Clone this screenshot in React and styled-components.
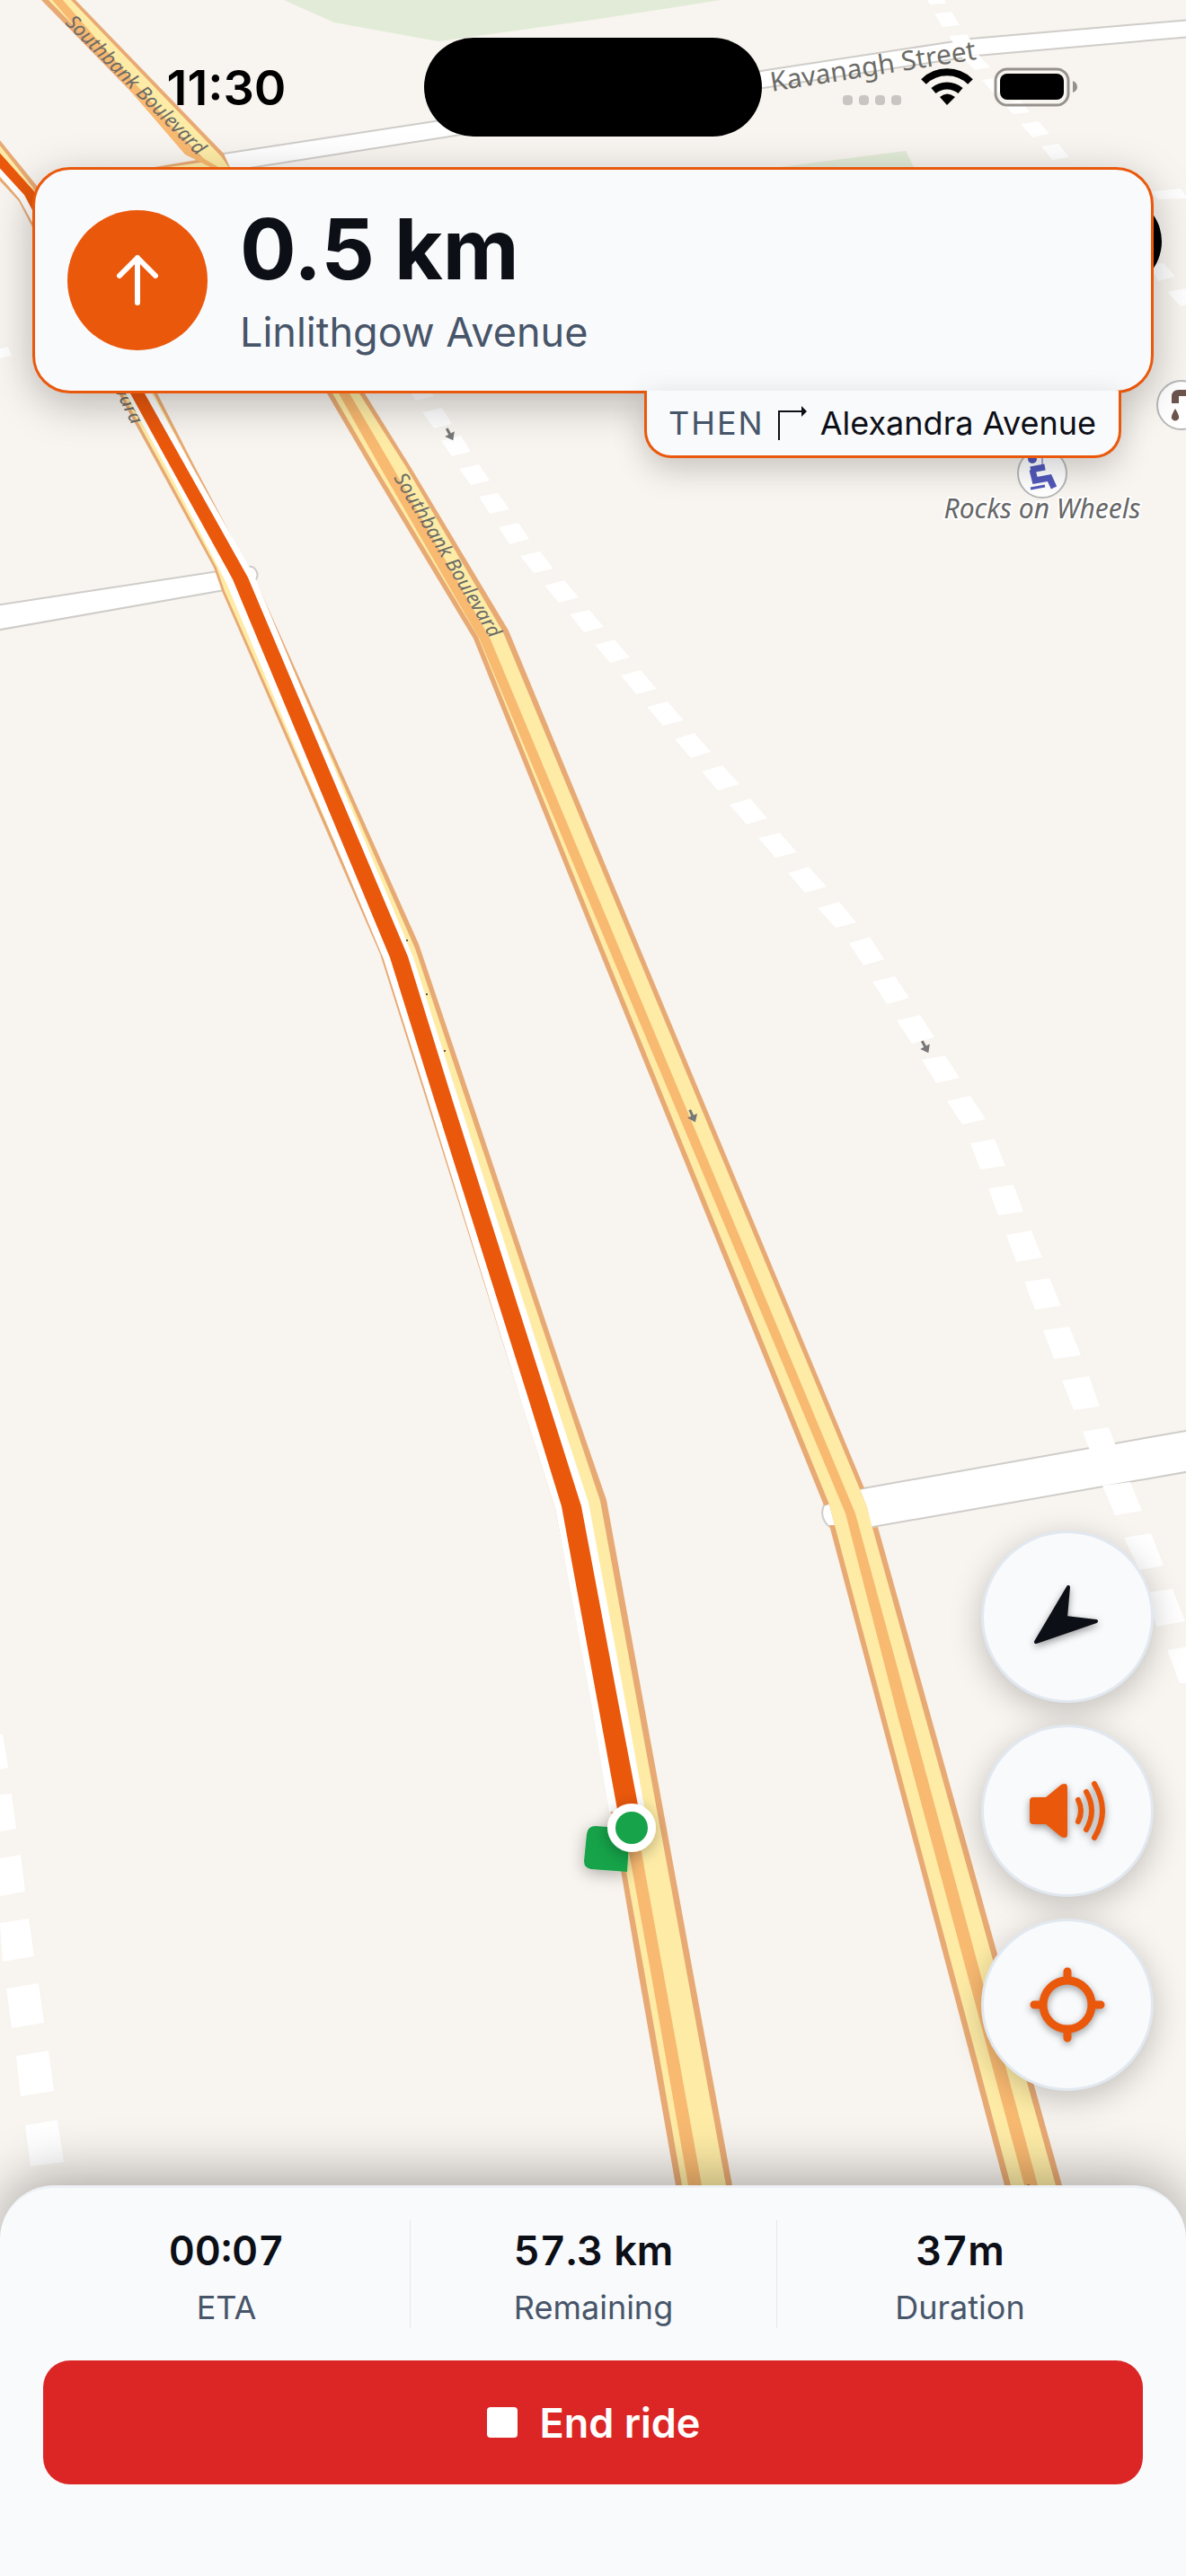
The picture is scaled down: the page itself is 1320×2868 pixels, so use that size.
import React from 'react';
import styled, { createGlobalStyle } from 'styled-components';

const GlobalStyle = createGlobalStyle`
    * {
        box-sizing: border-box;
    }
    body {
        margin: 0;
        background-color: #f8f4ef;
        font-family: Inter, 'Liberation Sans', sans-serif;
        color: #0d0f17;
    }
    h1, p, dl, dt, dd {
        margin: 0;
    }
`;

const Screen = styled.div`
    position: relative;
    display: flex;
    flex-direction: column;
    min-height: 100vh;
    overflow: hidden;
`;
const MapCanvas = styled.svg`
    position: absolute;
    inset: 0;
    width: 100%;
    height: 100%;
    z-index: -1;
`;
const RoadLabel = styled.text`
    font-family: 'Noto Sans', sans-serif;
    font-size: ${(props) => props.$size}px;
    font-style: ${(props) => (props.$italic ? 'italic' : 'normal')};
    fill: #6b6b66;
`;
const PoiLabel = styled.text`
    font-family: 'Noto Sans', sans-serif;
    font-size: 30px;
    font-style: italic;
    fill: #666;
    stroke: #fff;
    stroke-width: 4px;
    paint-order: stroke;
`;

const StatusBar = styled.header`
    display: grid;
    grid-template-columns: 1fr 376px 1fr;
    align-items: center;
    height: 110px;
    margin: 42px 32px 34px;
`;
const Clock = styled.time`
    text-align: center;
    font-size: 54px;
    font-weight: 600;
    color: #000;
`;
const Island = styled.div`
    height: 110px;
    border-radius: 55px;
    background-color: #000;
`;
const StatusIcons = styled.div`
    display: flex;
    justify-content: center;
`;

const TurnCard = styled.section`
    display: flex;
    align-items: center;
    gap: 36px;
    height: 252px;
    margin: 0 36px;
    padding: 0 36px;
    border: 3px solid #ea580c;
    border-radius: 42px;
    background-color: #f9fafc;
    box-shadow: 0 12px 48px rgba(0, 0, 0, 0.26);
`;
const TurnIcon = styled.div`
    display: flex;
    width: 156px;
    height: 156px;
    border-radius: 50%;
    background-color: #ea580c;
`;
const TurnText = styled.div`
    padding-bottom: 4px;
`;
const TurnDistance = styled.h1`
    font-size: 93px;
    line-height: 108px;
    font-weight: 700;
`;
const TurnRoad = styled.p`
    font-size: 45px;
    line-height: 54px;
    margin-top: 12px;
    color: #475569;
`;
const NextTurn = styled.div`
    display: flex;
    align-items: center;
    align-self: flex-end;
    gap: 15px;
    height: 75px;
    margin: -3px 72px 0 0;
    padding: 0 25px 0 24px;
    border: 3px solid #ea580c;
    border-top: 0;
    border-radius: 0 0 30px 30px;
    background-color: #f9fafc;
    box-shadow: 0 12px 36px rgba(0, 0, 0, 0.2);
    font-size: 36px;
    line-height: 42px;
`;
const Then = styled.span`
    color: #475569;
    letter-spacing: 2px;
`;

const MapControls = styled.div`
    display: flex;
    flex-direction: column;
    align-self: flex-end;
    gap: 24px;
    margin: auto 36px 105px 0;
`;
const RoundButton = styled.button`
    display: flex;
    width: 192px;
    height: 192px;
    padding: 0;
    border: 3px solid #e1e8f0;
    border-radius: 50%;
    background-color: #f9fafc;
    box-shadow: 0 9px 36px rgba(0, 0, 0, 0.22);
    svg {
        margin: auto;
        overflow: visible;
        filter: drop-shadow(0 3px 4px rgba(0, 0, 0, 0.4));
    }
`;

const Sheet = styled.footer`
    padding: 36px 48px 102px;
    border-top: 3px solid #edf1f6;
    border-radius: 60px 60px 0 0;
    background-color: #f9fafc;
    box-shadow: 0 -12px 60px rgba(0, 0, 0, 0.3);
`;
const Stats = styled.dl`
    display: grid;
    grid-template-columns: repeat(3, 1fr);
    margin-bottom: 36px;
`;
const Stat = styled.div`
    display: flex;
    flex-direction: column-reverse;
    justify-content: center;
    gap: 15px;
    height: 120px;
    padding-top: 4px;
    text-align: center;
    & + & {
        border-left: 1px solid #e4e7ec;
    }
`;
const StatLabel = styled.dt`
    font-size: 36px;
    line-height: 42px;
    color: #475569;
`;
const StatValue = styled.dd`
    font-size: 45px;
    line-height: 54px;
    font-weight: 600;
    font-variant-numeric: tabular-nums;
`;
const EndButton = styled.button`
    display: flex;
    align-items: center;
    justify-content: center;
    gap: 24px;
    width: 100%;
    height: 138px;
    border: 0;
    border-radius: 30px;
    background-color: #dc2626;
    color: #fff;
    font-family: inherit;
    font-size: 45px;
    font-weight: 600;
`;

const stats = [
    { label: 'ETA', value: '00:07' },
    { label: 'Remaining', value: '57.3 km' },
    { label: 'Duration', value: '37m' }
];

// tram tracks, one quad per dash
const dashes = [
    '1032,0 1051,0 1053,4 1035,5',
    '1040,15 1059,13 1068,28 1049,30',
    '1056,40 1076,38 1090,60 1070,63',
    '1070,63 1089,61 1102,75 1085,78',
    '1093,89 1112,86 1123,100 1106,104',
    '1117,115 1136,112 1146,125 1127,127',
    '1136,138 1156,135 1168,149 1149,153',
    '1159,163 1178,160 1190,175 1171,178',
    '1282,213 1314,210 1320,218 1320,221 1289,222',
    '1279,294 1295,293 1308,308 1289,313',
    '1299,325 1319,321 1325,338 1314,341',
    '0,388 9,386 13,396 0,399',
    '457,438 481,438 483,441 463,446',
    '470,459 492,454 503,472 483,477',
    '491,491 513,485 524,503 503,508',
    '511,522 533,517 545,535 524,540',
    '533,553 554,549 567,567 545,572',
    '555,587 577,582 589,600 567,606',
    '579,619 601,614 616,633 594,638',
    '606,652 628,646 644,665 622,671',
    '634,684 656,679 672,698 650,704',
    '662,718 684,712 701,732 679,738',
    '691,752 713,746 731,767 708,773',
    '720,787 743,781 761,802 738,808',
    '751,823 773,816 791,837 769,844',
    '781,859 804,852 823,873 799,880',
    '812,896 835,889 854,911 831,918',
    '844,933 868,927 887,949 863,955',
    '877,972 900,965 920,987 896,994',
    '910,1011 934,1004 953,1027 930,1033',
    '945,1050 968,1043 984,1068 961,1075',
    '971,1093 996,1087 1012,1111 987,1118',
    '998,1136 1024,1130 1040,1155 1015,1162',
    '1026,1180 1052,1175 1068,1200 1042,1206',
    '1054,1226 1080,1220 1097,1246 1071,1252',
    '1080,1273 1107,1268 1119,1298 1091,1302',
    '1100,1323 1128,1319 1139,1349 1111,1353',
    '1120,1375 1148,1370 1160,1400 1131,1405',
    '1140,1427 1168,1423 1181,1454 1152,1458',
    '1161,1481 1190,1477 1203,1509 1173,1513',
    '1182,1537 1212,1532 1224,1566 1195,1570',
    '1205,1594 1234,1589 1247,1623 1218,1628',
    '1227,1654 1258,1650 1271,1682 1241,1687',
    '1251,1712 1281,1707 1295,1743 1268,1748',
    '1276,1773 1305,1769 1319,1805 1287,1811',
    '1299,1837 1325,1833 1330,1874 1313,1874',
    '0,1931 3,1931 9,1968 0,1970',
    '0,1998 13,1997 18,2036 0,2039',
    '0,2069 23,2065 28,2106 0,2111',
    '0,2141 32,2136 38,2178 3,2184',
    '7,2214 43,2208 49,2252 13,2258',
    '18,2289 54,2283 60,2328 23,2334',
    '28,2366 64,2360 71,2407 34,2412'
];

const arrows = ['translate(501 484) rotate(-28)', 'translate(771 1243) rotate(-24)', 'translate(1030 1166) rotate(-28)', 'translate(1146 2440) rotate(-12)'];

function CityMap() {
    return (
        <MapCanvas viewBox="0 0 1320 2868" preserveAspectRatio="xMidYMid slice" role="img" aria-label="Map">
            <defs>
                <filter id="pinShadow" x="-60%" y="-60%" width="220%" height="220%">
                    <feDropShadow dx="0" dy="4" stdDeviation="9" floodColor="#000" floodOpacity="0.3" />
                </filter>
            </defs>
            <rect width="1320" height="2868" fill="#f8f4ef" />
            <path d="M316 0 L372 25 L488 46 L660 22 L802 0 Z M868 186 L1008 168 L1017 186 Z" fill="#e1ebd7" />

            {/* minor streets */}
            <g fill="#fff" stroke="#cfcdc9" strokeWidth="2">
                <path d="M249 171 L484 135 L847 79 L1056 47 L1081 43 L1325 22 V41 L1087 62 L849 98 L513 150 L220 196 Z" />
                <path d="M-5 674 L276 631 A9 9 0 0 1 284 646 L250 657 L-5 702 Z" />
                <path d="M950 1659 L1325 1592 V1638 L960 1702 L933 1702 A16 18 0 0 1 917 1676 Z" />
            </g>
            <g fill="#fff">
                {dashes.map((points) => (
                    <polygon key={points} points={points} />
                ))}
            </g>

            {/* Southbank Boulevard, east side */}
            <path d="M172 186 L220 178 L46 0 L84 0 L249 171 L262 200 L406 438 L457 520 L566 702 L689 1000 L962 1657 L957 1658 L965 1678 L970 1701 L977 1700 L1182 2433 L1190 2470 H1128 L1118 2433 L1000 1988 L923 1698 L929 1698 L923 1675 L917 1676 L660 1042 L527 711 L412 520 L364 438 L240 200 Z" fill="#e8aa74" />
            <path d="M180 187 L230 180 L54 0 L79 0 L246 174 L256 188 L400 438 L452 520 L560 704 L683 1000 L957 1658 L965 1678 L971 1701 L1175 2433 L1183 2470 H1136 L1125 2433 L1006 1988 L929 1698 L923 1675 L665 1040 L532 709 L418 520 L370 438 L250 200 Z" fill="#feeca6" />
            <path d="M58 0 H70 L219 172 L243 186 L389 438 L437 520 L546 712 L666 1000 L952 1685 L1000 1861 L1155 2433 L1160 2470 H1148 L1140 2433 L1000 1914 L941 1685 L654 1000 L534 712 L423 520 L377 438 L234 186 L206 172 Z" fill="#f8b971" />

            {/* Southbank Boulevard, west side */}
            <path d="M-5 150 L42 208 L175 438 L217 520 L276 632 L285 647 L466 1051 L523 1220 L637 1560 L675 1670 L717 1900 L772 2200 L815 2433 L822 2470 H757 L752 2433 L711 2200 L660 1900 L618 1680 L473 1220 L423 1062 L247 658 L238 632 L177 520 L132 438 L21 224 L-5 196 Z" fill="#e8aa74" />
            <path d="M-5 156 L36 208 L171 438 L214 520 L281 642 L462 1056 L517 1220 L631 1560 L668 1671 L710 1900 L765 2200 L808 2433 L815 2470 H764 L759 2433 L718 2200 L664 1900 L622 1680 L478 1220 L428 1064 L250 658 L241 632 L181 520 L136 438 L24 222 L-5 192 Z" fill="#feeca6" />
            <path d="M696 2040 L710 2040 L739 2200 L781 2433 L787 2470 H771 L766 2433 L725 2200 Z" fill="#f8b971" />

            <RoadLabel $size={22} $italic transform="translate(72 26) rotate(45)">Southbank Boulevard</RoadLabel>
            <RoadLabel $size={22} $italic transform="translate(438 532) rotate(59)">Southbank Boulevard</RoadLabel>
            <RoadLabel $size={22} $italic textAnchor="end" transform="translate(147 474) rotate(64)">Southbank Boulevard</RoadLabel>
            <RoadLabel $size={30} transform="translate(859 102) rotate(-9)">Kavanagh Street</RoadLabel>

            {/* planned route */}
            <path d="M-5 165 L46 222 L169 438 L214 520 L283 641 L460 1066 L509 1220 L618 1560 L655 1673 L697 1900 L718 2017 L678 2017 L659 1900 L618 1680 L580 1560 L475 1220 L427 1068 L252 649 L185 520 L140 438 L22 222 L-5 190 Z" fill="#fff" />
            <path d="M-5 165 L38 213 L161 438 L207 520 L276 643 L454 1065 L502 1220 L610 1560 L647 1677 L689 1900 L712 2020 L688 2020 L666 1900 L625 1677 L589 1560 L482 1220 L434 1066 L259 645 L190 520 L145 438 L27 217 L-5 182 Z" fill="#ea580c" />
            <g filter="url(#pinShadow)">
                <path d="M663 2033 L701 2036 L698 2084 L658 2081 Q650 2080 650 2072 L653 2042 Q654 2033 663 2033 Z" fill="#19a34a" />
            </g>
            <g filter="url(#pinShadow)">
                <circle cx="703" cy="2035" r="27" fill="#fff" />
                <circle cx="703" cy="2035" r="18" fill="#19a34a" />
            </g>

            {arrows.map((transform) => (
                <g key={transform} transform={transform}>
                    <path d="M0 -8 V0" stroke="#777" strokeWidth="3" />
                    <path d="M-6 -1 H6 L0 7 Z" fill="#777" />
                </g>
            ))}
            <path d="M452 1046 h2 v2 h-2 Z M474 1106 h2 v2 h-2 Z M494 1169 h2 v2 h-2 Z" fill="#555" />

            {/* points of interest */}
            <circle cx="1241" cy="269" r="52" />
            <circle cx="1160" cy="527" r="27" fill="#fff" stroke="#b8b8b8" strokeWidth="2" />
            <g fill="none" stroke="#5358bb" strokeWidth="5">
                <path d="M1147 523 L1163 520 M1149 523 L1152 535 L1168 532 L1173 543" strokeWidth="7" />
                <path d="M1147 544 L1163 541" strokeWidth="3" />
                <path d="M1160 506 V520" strokeWidth="1" />
            </g>
            <circle cx="1149" cy="511" r="5" fill="#5358bb" />
            <circle cx="1315" cy="451" r="27" fill="#fff" stroke="#b8b8b8" strokeWidth="2" />
            <path d="M1304 449 V442 Q1304 434 1312 434 H1325 V441 H1312 V449 Z M1308 455 Q1313 463 1312 466 Q1308 471 1304 466 Q1303 463 1308 455 Z" fill="#6d544c" />
            <PoiLabel x="1160" y="577" textAnchor="middle">
                Rocks on Wheels
            </PoiLabel>
        </MapCanvas>
    );
}

function App() {
    return (
        <Screen>
            <GlobalStyle />
            <CityMap />
            <StatusBar>
                <Clock>11:30</Clock>
                <Island />
                <StatusIcons>
                    <svg width="262" height="44" viewBox="936 75 262 44" aria-hidden="true">
                        <g fill="#c9c5c2">
                            <rect x="937" y="106" width="11" height="11" rx="4" />
                            <rect x="955" y="106" width="11" height="11" rx="4" />
                            <rect x="973" y="106" width="11" height="11" rx="4" />
                            <rect x="991" y="106" width="11" height="11" rx="4" />
                        </g>
                        <g fill="none" stroke="#000" strokeWidth="8">
                            <path d="M1027 91 A37 37 0 0 1 1079 91" />
                            <path d="M1038 101 A23 23 0 0 1 1068 101" />
                        </g>
                        <path d="M1045 108 Q1053 101 1062 108 L1053 117 Z" />
                        <rect x="1107" y="77" width="81" height="40" rx="13" fill="none" stroke="#96918d" strokeWidth="3" />
                        <rect x="1112" y="82" width="71" height="29" rx="8" />
                        <path d="M1193 90 Q1198 92 1198 97 Q1198 101 1193 103 Z" fill="#96918d" />
                    </svg>
                </StatusIcons>
            </StatusBar>

            <TurnCard>
                <TurnIcon>
                    <svg width="156" height="156" viewBox="0 0 156 156" fill="none" stroke="#fff" strokeWidth="6" strokeLinecap="round" strokeLinejoin="round" aria-hidden="true">
                        <path d="M78 103 V53 M58 73 L78 53 L98 73" />
                    </svg>
                </TurnIcon>
                <TurnText>
                    <TurnDistance>0.5 km</TurnDistance>
                    <TurnRoad>Linlithgow Avenue</TurnRoad>
                </TurnText>
            </TurnCard>
            <NextTurn>
                <Then>THEN</Then>
                <svg width="32" height="38" viewBox="1 0 32 38" aria-hidden="true">
                    <path d="M2 38 V6 H28" fill="none" stroke="#0d0f17" strokeWidth="2" />
                    <path d="M27 0 L33 6 L27 12 Z" fill="#0d0f17" />
                </svg>
                <span>Alexandra Avenue</span>
            </NextTurn>

            <MapControls>
                <RoundButton type="button" aria-label="Compass">
                    <svg width="84" height="84" viewBox="1146 1758 84 84" aria-hidden="true">
                        <path d="M1189 1767 L1186 1801 L1220 1805 L1153 1828 Z" fill="#0d0f17" stroke="#0d0f17" strokeWidth="4" strokeLinejoin="round" />
                    </svg>
                </RoundButton>
                <RoundButton type="button" aria-label="Sound">
                    <svg width="84" height="84" viewBox="1146 1974 84 84" aria-hidden="true">
                        <path d="M1150 2001 H1164 L1181 1987 Q1188 1984 1188 1990 V2042 Q1188 2048 1181 2045 L1164 2031 H1150 Q1146 2031 1146 2027 V2005 Q1146 2001 1150 2001 Z" fill="#ea580c" />
                        <g fill="none" stroke="#ea580c" strokeWidth="6" strokeLinecap="round">
                            <path d="M1200 2004 Q1206 2016 1200 2028" />
                            <path d="M1209 1995 Q1221 2016 1209 2037" />
                            <path d="M1218 1986 Q1236 2016 1218 2046" />
                        </g>
                    </svg>
                </RoundButton>
                <RoundButton type="button" aria-label="Locate">
                    <svg width="84" height="84" viewBox="0 0 84 84" fill="none" stroke="#ea580c" strokeWidth="9" aria-hidden="true">
                        <circle cx="42" cy="42" r="27" />
                        <path d="M42 5 V13 M42 71 V79 M5 42 H13 M71 42 H79" strokeLinecap="round" />
                    </svg>
                </RoundButton>
            </MapControls>

            <Sheet>
                <Stats>
                    {stats.map((stat) => (
                        <Stat key={stat.label}>
                            <StatLabel>{stat.label}</StatLabel>
                            <StatValue>{stat.value}</StatValue>
                        </Stat>
                    ))}
                </Stats>
                <EndButton type="button">
                    <svg width="36" height="36" viewBox="0 0 36 36" fill="#fff" aria-hidden="true">
                        <rect x="1" y="1" width="34" height="34" rx="4" />
                    </svg>
                    End ride
                </EndButton>
            </Sheet>
        </Screen>
    );
}

export default App;
